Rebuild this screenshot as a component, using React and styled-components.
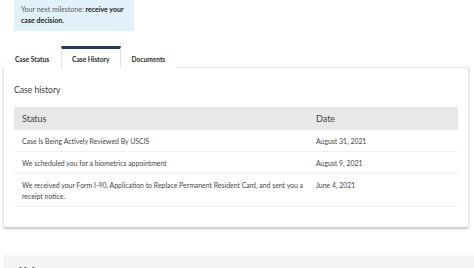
import React from "react";
import styled, { createGlobalStyle } from "styled-components";

const GlobalStyle = createGlobalStyle`
  html, body {
    margin: 0;
    padding: 0;
    background: #ffffff;
    overflow: hidden;
  }
  body {
    font-family: Lato, "Open Sans", sans-serif;
    color: #454545;
  }
`;

const history = [
  { status: ["Case Is Being Actively Reviewed By USCIS"], date: "August 31, 2021" },
  { status: ["We scheduled you for a biometrics appointment"], date: "August 9, 2021" },
  {
    status: [
      "We received your Form I-90, Application to Replace Permanent Resident Card, and sent you a",
      "receipt notice.",
    ],
    date: "June 4, 2021",
  },
];

const App = () => {
  return (
    <Page>
      <GlobalStyle />
      <Top>
        <Milestone>
          Your next milestone: <b>receive your</b>
          <br />
          <b>case decision.</b>
        </Milestone>
      </Top>
      <TabList>
        <Tab>Case Status</Tab>
        <Tab active>Case History</Tab>
        <Tab>Documents</Tab>
      </TabList>
      <Panel>
        <Heading>Case history</Heading>
        <Table>
          <thead>
            <tr>
              <Th>Status</Th>
              <Th date>Date</Th>
            </tr>
          </thead>
          <tbody>
            {history.map((h) => (
              <tr key={h.date}>
                <Td>
                  {h.status.map((line, i) => (
                    <Line key={i}>{line}</Line>
                  ))}
                </Td>
                <Td date>{h.date}</Td>
              </tr>
            ))}
          </tbody>
        </Table>
      </Panel>
      <Footer>
        <FooterTitle>Help</FooterTitle>
      </Footer>
    </Page>
  );
};

const Page = styled.div`
  width: 474px;
  height: 268px;
  padding: 0 5px 0 3px;
  box-sizing: border-box;
`;

const Top = styled.div`
  padding: 0 0 0 11px;
`;

const Milestone = styled.div`
  width: 120px;
  box-sizing: border-box;
  background: #e3f1fb;
  padding: 4px 7px 5px;
  font-size: 7px;
  line-height: 11px;
  color: #5c5c5c;
  white-space: nowrap;

  b {
    color: #1b1b1b;
    font-weight: 700;
  }
`;

const TabList = styled.div`
  display: flex;
  margin-top: 15px;
  padding-left: 1px;
`;

const Tab = styled.div`
  height: 22px;
  box-sizing: border-box;
  padding: 0 10px;
  display: flex;
  align-items: center;
  font-size: 6.6px;
  font-weight: 700;
  color: #2b2b2b;
  border-top: 3px solid ${(p) => (p.active ? "#1c3d61" : "transparent")};
  border-left: 1px solid ${(p) => (p.active ? "#e4e4e4" : "transparent")};
  border-right: 1px solid ${(p) => (p.active ? "#e4e4e4" : "transparent")};
  background: #fff;
  margin-bottom: -1px;
  position: relative;
  z-index: 1;
  margin-right: ${(p) => (p.active ? "0" : "1px")};
`;

const Panel = styled.div`
  border: 1px solid #e6e6e6;
  border-bottom-color: #cfcfcf;
  box-shadow: 0 1px 2px rgba(0, 0, 0, 0.25);
  border-radius: 0 0 3px 3px;
  padding: 16px 10px 20px;
`;

const Heading = styled.h3`
  margin: 0 0 11px;
  font-size: 8.6px;
  line-height: 12px;
  font-weight: 400;
  color: #3d3d3d;
`;

const Table = styled.table`
  width: 100%;
  table-layout: fixed;
  border-collapse: collapse;
`;

const Th = styled.th`
  box-sizing: border-box;
  background: #e8e8e8;
  height: 23px;
  padding: 0 8px;
  text-align: left;
  font-size: 9px;
  font-weight: 400;
  color: #444;
  width: ${(p) => (p.date ? "150px" : "auto")};
`;

const Td = styled.td`
  padding: 6px 8px 4px;
  font-size: 6.9px;
  line-height: 11px;
  color: #474747;
  border-bottom: 1px solid #f0f0f0;
  vertical-align: top;
`;

const Line = styled.div`
  white-space: nowrap;
`;

const Footer = styled.div`
  margin-top: 27px;
  background: #f5f5f5;
  margin-right: -5px;
  height: 40px;
  padding: 9px 0 0 16px;
  box-sizing: border-box;
`;

const FooterTitle = styled.div`
  font-size: 10px;
  font-weight: 700;
  color: #333;
`;

export default App;
